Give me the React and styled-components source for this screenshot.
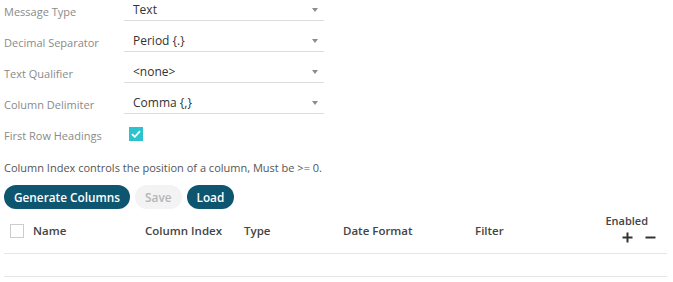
import React, { useState } from "react";
import styled, { createGlobalStyle } from "styled-components";

const GlobalStyle = createGlobalStyle`
  body {
    margin: 0;
    background: #fff;
    font-family: "Open Sans", "Liberation Sans", sans-serif;
    font-size: 11px;
  }
`;

const fields = [
  { label: "Message Type", value: "Text" },
  { label: "Decimal Separator", value: "Period {.}" },
  { label: "Text Qualifier", value: "<none>" },
  { label: "Column Delimiter", value: "Comma {,}" },
];

const columns = ["Name", "Column Index", "Type", "Date Format", "Filter"];

export default function App() {
  const [headings, setHeadings] = useState(true);

  return (
    <>
      <GlobalStyle />
      <Wrapper>
        {fields.map((f) => (
          <Row key={f.label}>
            <Label>{f.label}</Label>
            <Select>
              <span>{f.value}</span>
              <Caret />
            </Select>
          </Row>
        ))}
        <Row>
          <Label>First Row Headings</Label>
          <CheckBox checked={headings} onClick={() => setHeadings(!headings)}>
            {headings && (
              <svg width="10" height="8" viewBox="0 0 10 8">
                <path d="M1 4.2 L3.8 6.8 L9 1.2" fill="none" stroke="#fff" strokeWidth="1.8" />
              </svg>
            )}
          </CheckBox>
        </Row>

        <Info>Column Index controls the position of a column, Must be &gt;= 0.</Info>

        <Actions>
          <PillButton>Generate Columns</PillButton>
          <PillButton disabled>Save</PillButton>
          <PillButton>Load</PillButton>
        </Actions>

        <HeaderRow>
          <div>
            <EmptyBox />
          </div>
          {columns.map((c) => (
            <Cell key={c}>{c}</Cell>
          ))}
          <EnabledCell>
            <EnabledLabel>Enabled</EnabledLabel>
            <IconRow>
              <svg width="11" height="11" viewBox="0 0 11 11">
                <path d="M5.5 0.5 V10.5 M0.5 5.5 H10.5" stroke="#333" strokeWidth="2" />
              </svg>
              <svg width="11" height="11" viewBox="0 0 11 11">
                <path d="M0.5 5.5 H10.5" stroke="#333" strokeWidth="2" />
              </svg>
            </IconRow>
          </EnabledCell>
        </HeaderRow>
        <EmptyRow />
      </Wrapper>
    </>
  );
}

const Wrapper = styled.div`
  padding: 0 6px 0 4px;
  width: 663px;
`;

const Row = styled.div`
  display: flex;
  align-items: flex-start;
  height: 31px;
`;

const Label = styled.div`
  width: 120px;
  padding-top: 4px;
  line-height: 16px;
  color: #8a8a8a;
`;

const Select = styled.div`
  position: relative;
  box-sizing: border-box;
  width: 200px;
  height: 21px;
  padding: 2px 9px 0;
  line-height: 16px;
  font-size: 12px;
  color: #333;
  border-bottom: 1px solid #dcdcdc;
`;

const Caret = styled.i`
  position: absolute;
  right: 6px;
  top: 8px;
  width: 0;
  height: 0;
  border-left: 3.5px solid transparent;
  border-right: 3.5px solid transparent;
  border-top: 4px solid #8c8c8c;
`;

const CheckBox = styled.div`
  box-sizing: border-box;
  width: 14px;
  height: 14px;
  margin: 3px 0 0 5px;
  background: ${(p) => (p.checked ? "#2cc3cf" : "#fff")};
  border: ${(p) => (p.checked ? "none" : "1px solid #ccc")};
  display: flex;
  align-items: center;
  justify-content: center;
  cursor: pointer;
`;

const Info = styled.div`
  margin-top: 5px;
  line-height: 16px;
  color: #555;
`;

const Actions = styled.div`
  display: flex;
  gap: 5px;
  margin-top: 9px;
`;

const PillButton = styled.button`
  height: 24px;
  padding: 0 10px;
  border: none;
  border-radius: 12px;
  font-family: inherit;
  font-size: 11.8px;
  font-weight: 600;
  background: ${(p) => (p.disabled ? "#f3f3f3" : "#0e5670")};
  color: ${(p) => (p.disabled ? "#b5b5b5" : "#fff")};
  cursor: ${(p) => (p.disabled ? "default" : "pointer")};
`;

const HeaderRow = styled.div`
  display: grid;
  grid-template-columns: 29px 112px 99px 99px 132px 1fr auto;
  align-items: center;
  height: 44px;
  border-bottom: 1px solid #e6e6e6;
`;

const Cell = styled.div`
  font-size: 11.5px;
  font-weight: 600;
  color: #444;
  line-height: 16px;
`;

const EmptyBox = styled.div`
  box-sizing: border-box;
  width: 14px;
  height: 14px;
  margin-left: 6px;
  border: 1px solid #ccc;
`;

const EnabledCell = styled(Cell)`
  align-self: start;
  padding-top: 4px;
  display: flex;
  flex-direction: column;
  align-items: flex-end;
  padding-right: 11px;
`;

const EnabledLabel = styled.span`
  font-size: 11px;
  margin-right: 8px;
`;

const IconRow = styled.div`
  display: flex;
  gap: 12px;
  margin-top: 3px;
`;

const EmptyRow = styled.div`
  height: 22px;
  border-bottom: 1px solid #e6e6e6;
`;
